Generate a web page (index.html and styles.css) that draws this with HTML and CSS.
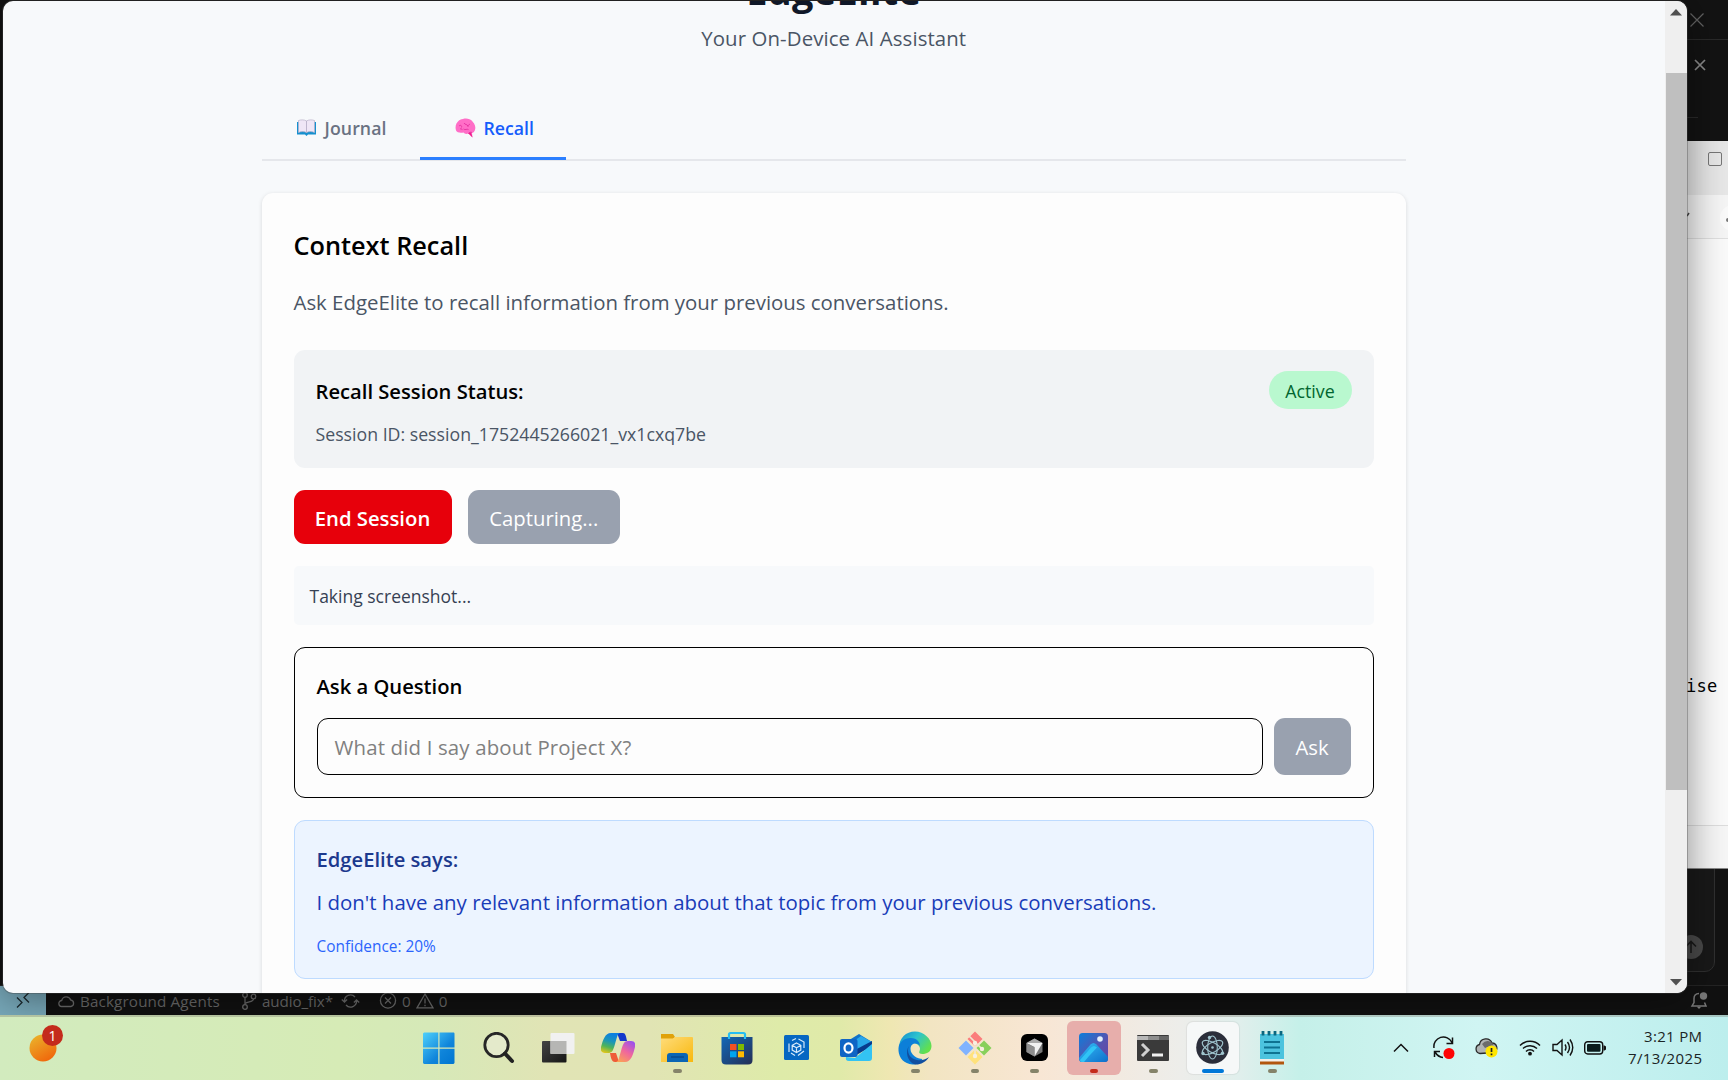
FILE: index.html
```html
<!DOCTYPE html>
<html lang="en">
<head>
<meta charset="utf-8">
<title>EdgeElite</title>
<link rel="stylesheet" href="styles.css">
</head>
<body>
<div class="desktop">

  <div class="editor">
    <svg class="editor-close" width="14" height="14" viewBox="0 0 14 14"><path d="M.5.5l13 13M13.5.5l-13 13" stroke="#646464" stroke-width="1.2"/></svg>
    <svg class="editor-tab-close" width="12" height="12" viewBox="0 0 12 12"><path d="M1 1l10 10M11 1L1 11" stroke="#8c8c8c" stroke-width="1.7"/></svg>
    <i class="editor-rule"></i>
    <i class="editor-rule short"></i>
    <div class="editor-chat"><span class="send"><svg width="14" height="14" viewBox="0 0 14 14" fill="none" stroke="#191919" stroke-width="1.6"><path d="M7 13V1.5M2 6.5l5-5 5 5"/></svg></span></div>
    <footer class="statusbar">
      <span class="remote"><svg width="14" height="17" viewBox="0 0 14 17" fill="none" stroke="#1b2a30" stroke-width="1.3"><path d="M1 5.500l5 5-5 5M13 .5l-5 5 5 5"/></svg></span>
      <span class="st agents"><svg width="17" height="14" viewBox="0 0 17 14" fill="none" stroke="#6a6a6a" stroke-width="1.3"><path d="M4 12.500a3 3 0 0 1-.3-6A4.700 4.700 0 0 1 12.700 6a3.300 3.300 0 0 1 .3 6.500z"/></svg><b>Background Agents</b></span>
      <span class="st branch"><svg width="16" height="18" viewBox="0 0 16 18" fill="none" stroke="#6a6a6a" stroke-width="1.3"><circle cx="4" cy="3" r="2.300"/><circle cx="4" cy="15" r="2.300"/><circle cx="12.500" cy="4.500" r="2.300"/><path d="M4 5.300v7.400M12.500 7c0 3-5 2.500-8.500 4.500"/></svg><b>audio_fix*</b></span>
      <svg class="sync" width="19" height="16" viewBox="0 0 19 16" fill="none" stroke="#6a6a6a" stroke-width="1.3"><path d="M3.500 8.500A6 6 0 0 1 14 4M15.500 7.500A6 6 0 0 1 5 12M.8 6.500l2.700 2.500 2.600-2.500M18.200 9.500L15.500 7l-2.600 2.500"/></svg>
      <span class="st errs"><svg width="18" height="17" viewBox="0 0 18 17" fill="none" stroke="#6a6a6a" stroke-width="1.300"><circle cx="9" cy="8.500" r="7.600"/><path d="M6 5.500l6 6M12 5.500l-6 6"/></svg><b>0</b><svg width="18" height="16" viewBox="0 0 18 16" fill="none" stroke="#6a6a6a" stroke-width="1.300"><path d="M9 1L1 14.800h16zM9 5.500v5M9 11.800v1.500"/></svg><b>0</b></span>
      <svg class="bell" width="18" height="18" viewBox="0 0 18 18" fill="none" stroke="#7a7a7a" stroke-width="1.500"><path d="M9 1.500c-3.600 0-5 2.300-5 5v4L2 14h14l-1.500-3.500"/><path d="M6.800 14.800h4.400L9 17z" fill="#7a7a7a" stroke="none"/><circle cx="13.500" cy="4" r="3.700" fill="#7a7a7a" stroke="none"/></svg>
    </footer>
  </div>

  <div class="notes">
    <div class="notes-title"><i></i></div>
    <div class="notes-menu"><svg width="41" height="44" viewBox="0 0 41 44"><path d="M0 21l2-3" stroke="#444" stroke-width="1.500"/><circle cx="46" cy="23" r="13" fill="#fbfbfb"/><circle cx="41" cy="25" r="2" fill="#777"/></svg></div>
    <div class="notes-text">ise</div>
    <div class="notes-foot"></div>
  </div>

  <div class="window">
    <main class="page">
      <header class="hero">
        <h1><span>EdgeElite</span></h1>
        <p><span>Your On-Device AI Assistant</span></p>
      </header>
      <nav class="tabs">
        <a class="tab">
          <svg width="19" height="17" viewBox="0 0 19 17"><path d="M0 3h19v12.500h-8l-1.500 1.500-1.500-1.500H0z" fill="#1590cf"/><path d="M1.500 1.500C4 .6 7.500.6 9.500 2v11.500c-2-1.200-5.500-1.200-8 0zM17.500 1.500C15 .6 11.500.6 9.500 2v11.500c2-1.200 5.500-1.200 8 0z" fill="#efe6f6" stroke="#b9b0c9" stroke-width=".7"/></svg>
          <span class="journal">Journal</span>
        </a>
        <a class="tab active">
          <svg width="21" height="20" viewBox="0 0 21 20"><path d="M8 1C11 0 15 .5 17.500 3.500c2.500 2.500 3.500 6 2.500 8.500-.7 2-2 3-3 3l.5 4.500-4-4c-2.500.8-4 .3-5-1-3 .5-6.500.3-7.500-2C0 9 .7 5.500 3 3.500 4 2 6 1 8 1z" fill="#ff6ec7"/><path d="M4 8c2-1.500 3 0 2.500 1.500M9 5c1 2 3 1 4 3M15 6c-1 1-2.500 1-2 3M8.500 11c2 1.500 3-.5 5 .5M5 11c1-.5 2 0 2.500 1M13.500 15.500c1-1.500 2.500-1.500 3.500-1" fill="none" stroke="#e02a9a" stroke-width=".8"/><path d="M13 15l3-.5 1.500 5z" fill="#f01e8c"/></svg>
          <span class="recall">Recall</span>
        </a>
      </nav>
      <section class="card">
        <h2><span>Context Recall</span></h2>
        <p class="lead"><span>Ask EdgeElite to recall information from your previous conversations.</span></p>
        <div class="status">
          <div>
            <h3><span>Recall Session Status:</span></h3>
            <p><span>Session ID: session_1752445266021_vx1cxq7be</span></p>
          </div>
          <span class="pill">Active</span>
        </div>
        <div class="actions">
          <button class="btn end"><span>End Session</span></button>
          <button class="btn busy"><span>Capturing...</span></button>
        </div>
        <div class="message"><span>Taking screenshot...</span></div>
        <div class="ask">
          <h3><span>Ask a Question</span></h3>
          <div class="ask-row">
            <div class="field"><span>What did I say about Project X?</span></div>
            <button class="btn ask-btn"><span>Ask</span></button>
          </div>
        </div>
        <div class="answer">
          <h3><span>EdgeElite says:</span></h3>
          <p class="reply"><span>I don't have any relevant information about that topic from your previous conversations.</span></p>
          <p class="confidence"><span>Confidence: 20%</span></p>
        </div>
      </section>
    </main>
    <aside class="scroll">
      <svg width="12" height="7" viewBox="0 0 12 7"><path d="M0 6.500L6 0l6 6.500z" fill="#505050"/></svg>
      <i class="thumb"></i>
      <svg width="12" height="7" viewBox="0 0 12 7"><path d="M0 0l6 6.500L12 0z" fill="#505050"/></svg>
    </aside>
  </div>

  <div class="taskbar">
    <div class="widgets">
      <svg width="28" height="32" viewBox="0 0 28 32"><defs><linearGradient id="sun" x1="0" y1="0" x2=".6" y2="1"><stop offset="0" stop-color="#eab92e"/><stop offset="1" stop-color="#f0690c"/></linearGradient></defs><circle cx="14" cy="17" r="13.500" fill="url(#sun)"/></svg>
      <span class="badge">1</span>
    </div>
    <div class="apps">
      <span class="app"><svg width="32" height="32" viewBox="0 0 32 32"><defs><linearGradient id="win" x1="0" y1="0" x2="1" y2="1"><stop offset="0" stop-color="#4fd0fb"/><stop offset=".6" stop-color="#0f85db"/><stop offset="1" stop-color="#0075d0"/></linearGradient></defs><path d="M1 .5h14.300v15H0V1.500zM16.500.5H31l.5 1v14h-15zM0 16.700h15.300V32H1l-1-1zM16.500 16.700h15V31l-1 1h-14z" fill="url(#win)"/></svg></span>
      <span class="app"><svg width="32" height="32" viewBox="0 0 32 32"><circle cx="13.500" cy="13" r="11.700" fill="#e9edd9" fill-opacity=".6" stroke="#262626" stroke-width="2.800"/><path d="M22 21.500l7 7.500" stroke="#222" stroke-width="4" stroke-linecap="round"/></svg></span>
      <span class="app"><svg width="34" height="32" viewBox="0 0 34 32"><defs><linearGradient id="tv" x1="0" y1="0" x2="1" y2="1"><stop offset="0" stop-color="#444"/><stop offset="1" stop-color="#161616"/></linearGradient></defs><rect x="1" y="9" width="24.500" height="21.500" rx="1" fill="url(#tv)"/><rect x="9.500" y="1" width="24" height="21" rx="1" fill="#f1f1f1"/><path d="M9.500 9h16v13h-16z" fill="#b6b6b4"/></svg></span>
      <span class="app"><svg width="34" height="30" viewBox="0 0 34 30"><defs><linearGradient id="cp1" x1=".4" y1="0" x2=".1" y2="1"><stop offset="0" stop-color="#0c7fe0"/><stop offset=".35" stop-color="#1b96b8"/><stop offset=".65" stop-color="#50b457"/><stop offset="1" stop-color="#f5c813"/></linearGradient><linearGradient id="cp2" x1=".8" y1="0" x2=".2" y2="1"><stop offset="0" stop-color="#9a50ee"/><stop offset=".5" stop-color="#f0679c"/><stop offset="1" stop-color="#fba256"/></linearGradient></defs><path d="M16 0h6c2.500 0 3 3 4 8h-7z" fill="#1238cb"/><path d="M9 20h6l3 9h-4c-3 0-4-3-5-9z" fill="#ee5b38"/><path d="M10 0h9c-3 1-3 5-5 11-2 7-3 9-7 9H4c-3 0-5-2-4-6 2-7 4-14 10-14z" fill="url(#cp1)"/><path d="M24 29h-9c3-1 3-5 5-11 2-7 3-10 7-10h3c3 0 5 2 4 6-2 8-4 15-10 15z" fill="url(#cp2)"/></svg></span>
      <span class="app run"><svg width="34" height="32" viewBox="0 0 34 32"><defs><linearGradient id="fo" x1="0" y1="0" x2="1" y2="1"><stop offset="0" stop-color="#ffdc7a"/><stop offset="1" stop-color="#f8b80d"/></linearGradient></defs><path d="M1 2h12l2 3-3 3H1z" fill="#e0a20a"/><path d="M1 6.500h12l2-1.500h17q1 0 1 1v24H1z" fill="url(#fo)"/><path d="M7 30v-6q0-3 3-3h15q3 0 3 3v6z" fill="#0b66b4"/><path d="M11 25h13" stroke="#083f7c"/></svg></span>
      <span class="app"><svg width="32" height="34" viewBox="0 0 32 34"><defs><linearGradient id="sto" x1="0" y1="0" x2="1" y2="1"><stop offset="0" stop-color="#1168b8"/><stop offset="1" stop-color="#252e54"/></linearGradient></defs><path d="M.5 6h31v23q0 4.500-4.500 4.500H5Q.5 33.500.5 29z" fill="url(#sto)"/><path d="M8 8V3.500Q8 2 9.500 2h13Q24 2 24 3.500V8" fill="none" stroke="#25bdf2" stroke-width="2.200"/><path d="M9 13h6.500v6H9z" fill="#f25022"/><path d="M17 13h6v6h-6z" fill="#7fba00"/><path d="M9 20.300h6.500v6H9z" fill="#00a4ef"/><path d="M17 20.300h6v6h-6z" fill="#ffb900"/></svg></span>
      <span class="app"><svg width="25" height="25" viewBox="0 0 25 25"><rect width="25" height="25" rx="1.500" fill="#0667c2"/><path d="M12.500 8l4.300 2.300v4.800l-4.300 2.500-4.300-2.500v-4.800zM8.200 10.300l4.300 2.400 4.300-2.400M12.500 12.700v4.900M5 17V8.500M8 5.500l4-2M14.500 4L20 7v6M20 16l-6 4.500M11 20.500L7 18" fill="none" stroke="#d7eafa" stroke-width="1.200"/></svg></span>
      <span class="app"><svg width="34" height="30" viewBox="0 0 34 30"><path d="M7 9L20 1l13 8v8H7z" fill="#1173c9"/><path d="M15 8l7-5 11 6-14 11z" fill="#28a8ea"/><path d="M33 8v5L14 24v-6z" fill="#083b8d"/><path d="M33 11v14q0 3-3 3H10q-4 0-3-4l9 1z" fill="#33c3f3"/><rect x="1" y="6" width="17.500" height="18" rx="2" fill="#0f65c5"/><ellipse cx="9.500" cy="15" rx="4" ry="4.700" fill="none" stroke="#fff" stroke-width="2.200"/></svg></span>
      <span class="app run"><svg width="34" height="34" viewBox="0 0 34 34"><defs><linearGradient id="ed" x1="0" y1="0" x2="1" y2=".6"><stop offset="0" stop-color="#1388cf"/><stop offset=".5" stop-color="#2cc3cf"/><stop offset="1" stop-color="#62e04d"/></linearGradient></defs><path d="M1 17C1 7 8 .5 17 .5S33.500 8 33.500 15c0 6-5 8-9 8-3 0-4-1-3-3 2-4-2-8-7-8C7 12 1 17 1 17z" fill="url(#ed)"/><path d="M.5 17c.5-6 6-10 12-10 7 0 10 5 9 8-2-4-9-3-9 3 0 6 7 10 12 10-4 6-10 6-13 5C4 31 0 25 .5 17z" fill="#0c7fd8"/><path d="M11 15c-3 6 1 13 8 14 5 .8 9-.5 12-3-3 5-9 8-14 7.500C9 31 7 20 11 15z" fill="#114fa0"/></svg></span>
      <span class="app run"><svg width="34" height="34" viewBox="0 0 34 34"><path d="M17 .5l7.500 7.500-7.500 7.500L9.500 8z" fill="#fb7d7c"/><path d="M8 9.500l7.500 7.500L8 24.500.5 17z" fill="#80b3ff"/><path d="M26 9.500l7.500 7.500-7.500 7.500-7.500-7.500z" fill="#87d05a"/><path d="M17 18.500l7.500 7.500-7.500 7.500L9.500 26z" fill="#ffe27c"/><path d="M11 5l6 6v13M17 11l7 7" stroke="#f1e5d0" stroke-width="1.700" fill="none"/><g fill="#f7efe0"><circle cx="17" cy="12" r="2.200"/><circle cx="24" cy="18" r="2.200"/><circle cx="17" cy="25" r="2.200"/></g></svg></span>
      <span class="app run"><svg width="27" height="27" viewBox="0 0 27 27"><rect width="27" height="27" rx="6" fill="#000"/><path d="M13.500 4.500l8 4.500v9l-8 4.500-8-4.500V9z" fill="#777"/><path d="M5.500 9l8-4.500 8 4.500z" fill="#aaa"/><path d="M5.500 9h16l-8 13.500V13z" fill="#f1f1f1"/><path d="M5.500 9l8 4.500v9l-8-4.500z" fill="#8d8d8d"/></svg></span>
      <span class="app run photos"><svg width="29" height="29" viewBox="0 0 29 29"><defs><linearGradient id="ph" x1="0" y1="0" x2="1" y2="1"><stop offset="0" stop-color="#0c7edb"/><stop offset=".6" stop-color="#5a51ae"/><stop offset="1" stop-color="#6147a5"/></linearGradient><linearGradient id="ph2" x1="0" y1="0" x2="1" y2="1"><stop offset="0" stop-color="#35bdf5"/><stop offset="1" stop-color="#0d6fcc"/></linearGradient></defs><rect width="29" height="29" rx="3.500" fill="url(#ph)"/><path d="M0 25l11.500-13.500q3-3 6 0L29 24v2q0 3-3 3H3q-3 0-3-4z" fill="url(#ph2)"/><path d="M1 27l11-12.500q3-3 6 0L10 23l-5 6H3q-2 0-2-2z" fill="#30c4f6"/><circle cx="21" cy="6" r="2.800" fill="#e3f0fc"/></svg></span>
      <span class="app run"><svg width="32" height="26" viewBox="0 0 32 26"><rect width="32" height="26" rx="1" fill="#3a3a3a"/><path d="M0 1h11v4H0z" fill="#b7b7b7"/><path d="M11 1h11v4H11z" fill="#8e8e8e"/><path d="M22 1h10v4H22z" fill="#666"/><path d="M5 9l6 6-6 6" fill="none" stroke="#d0d0d0" stroke-width="3"/><path d="M15 20h11" stroke="#f0f0f0" stroke-width="3"/></svg></span>
      <span class="app run current"><svg width="33" height="33" viewBox="0 0 33 33"><circle cx="16.500" cy="16.500" r="16.300" fill="#2b2e3a"/><g fill="none" stroke="#9fc4ce" stroke-width="1.100"><ellipse cx="16.500" cy="16.500" rx="11.500" ry="4.800" transform="rotate(90 16.500 16.500)"/><ellipse cx="16.500" cy="16.500" rx="11.500" ry="4.800" transform="rotate(30 16.500 16.500)"/><ellipse cx="16.500" cy="16.500" rx="11.500" ry="4.800" transform="rotate(-30 16.500 16.500)"/></g><g fill="#9fc4ce"><circle cx="16.500" cy="16.500" r="1.300"/><circle cx="7" cy="22.500" r="1.700"/><circle cx="26.500" cy="22.300" r="1.700"/><circle cx="13.500" cy="6.500" r="1.700"/></g></svg></span>
      <span class="app run"><svg width="26" height="34" viewBox="0 0 26 34"><path d="M1 3h24v26H1z" fill="#4cc3de"/><path d="M4 0v4.500M10 0v4.500M16 0v4.500M22 0v4.500" stroke="#0a6780" stroke-width="2.800"/><path d="M5 11h16M5 16.500h16M5 22h16" stroke="#0e7391" stroke-width="1.800"/><path d="M1 28h24v3H1z" fill="#f4efe9"/><path d="M1 30.500h24v3H1z" fill="#b2560e"/></svg></span>
    </div>
    <div class="tray">
      <svg class="chev" width="16" height="10" viewBox="0 0 16 10" fill="none" stroke="#111" stroke-width="1.500"><path d="M1 8.500l7-7 7 7"/></svg>
      <svg class="upd" width="24" height="24" viewBox="0 0 24 24" fill="none" stroke="#111" stroke-width="1.500"><path d="M2 12A9.500 9.500 0 0 1 20 6.500M20.500 1.500v6h-6M2.500 21v-5.500H8M3 16q3 5 8 5.500"/><circle cx="17" cy="17.500" r="5.500" fill="#fe0505" stroke="none"/></svg>
      <svg class="cloud" width="24" height="20" viewBox="0 0 24 20"><path d="M5 15.500a4.600 4.600 0 0 1-.5-9A6.500 6.500 0 0 1 17 5a5 5 0 0 1 2 9.500z" fill="#b0b4b4" stroke="#2a2a2a" stroke-width="1.300"/><path d="M10 10L7 6q4-5 9-2l3 3z" fill="#6c6c6c"/><circle cx="16.500" cy="13.500" r="6" fill="#ffe500"/><path d="M16.500 10v4M16.500 15.500v1.700" stroke="#222" stroke-width="1.700"/></svg>
      <svg class="wifi" width="22" height="17" viewBox="0 0 22 17" fill="none" stroke="#111" stroke-width="1.500"><path d="M1 6.500a14 14 0 0 1 20 0M4 9.500a10 10 0 0 1 14 0M7 12.500a5.700 5.700 0 0 1 8 0"/><circle cx="11" cy="14.700" r="1.900" fill="#111" stroke="none"/></svg>
      <svg class="vol" width="22" height="19" viewBox="0 0 22 19" fill="none" stroke="#111" stroke-width="1.400"><path d="M1 6.500h4L10 2v15l-5-4.500H1zM13 6.500q2 3 0 6M15.500 4q4 5.500 0 11M18 1.500q5.500 8 0 16"/></svg>
      <svg class="bat" width="22" height="14" viewBox="0 0 22 14"><rect x=".7" y=".7" width="18" height="12.300" rx="3" fill="none" stroke="#111" stroke-width="1.400"/><rect x="3" y="3" width="13.500" height="7.700" rx="1" fill="#0b1c1c"/><path d="M19.500 4.500h1l1.500 1v3l-1.500 1h-1z" fill="#111"/></svg>
      <div class="clock"><span class="time">3:21 PM</span><span class="date">7/13/2025</span></div>
    </div>
  </div>
</div>
</body>
</html>
```
FILE: styles.css
```css
* { box-sizing: border-box; margin: 0; padding: 0; }
html, body { width: 1728px; height: 1080px; overflow: hidden; }
body { font-family: "Open Sans", "Noto Sans", sans-serif; color: #000; }
svg { display: block; flex: none; }
b { font-weight: 400; }
.desktop { position: relative; width: 1728px; height: 1080px; background: #111; overflow: hidden; }

/* dark editor behind everything */
.editor { position: absolute; inset: 0 0 65px 0; background: #131313; }
.editor-close { position: absolute; left: 1690px; top: 13px; }
.editor-tab-close { position: absolute; left: 1694px; top: 59px; }
.editor-rule { position: absolute; right: 0; top: 39px; width: 42px; height: 1px; background: #2a2a2a; }
.editor-rule.short { top: 117px; right: 30px; width: 12px; }
.editor-chat { position: absolute; left: 1600px; top: 800px; width: 115px; height: 172px; border: 1px solid #303030; border-radius: 10px; background: #191919; }
.send { position: absolute; right: 11px; bottom: 12px; width: 24px; height: 24px; border-radius: 50%; background: #4a4a4a; display: flex; align-items: center; justify-content: center; }
.statusbar { position: absolute; left: 0; right: 0; bottom: 0; height: 30px; border-top: 1px solid #242424; background: #111; display: flex; align-items: center; color: #6a6a6a; font-size: 15.2px; line-height: 20px; }
.remote { width: 46px; height: 30px; background: #78a9ba; display: flex; align-items: center; justify-content: center; margin-right: 12px; }
.st { display: flex; align-items: center; }
.agents { gap: 5px; width: 183px; letter-spacing: .15px; }
.branch { gap: 5px; width: 100px; letter-spacing: -.1px; }
.errs { gap: 5px; margin-left: 19px; }
.bell { margin-left: auto; margin-right: 20px; }

/* light document window */
.notes { position: absolute; left: 1400px; top: 141px; width: 340px; height: 728px; background: #fbfbfb; display: flex; flex-direction: column; border-bottom: 1px solid #888; }
.notes-title { height: 54px; background: #e8e8e8; padding: 11px 0 0 308px; }
.notes-title i { display: block; width: 14px; height: 14px; border: 1.500px solid #777; border-radius: 2px; }
.notes-menu { height: 44px; background: #f6f6f6; border-bottom: 1px solid #e0e0e0; padding-left: 287px; }
.notes-text { flex: 1; padding: 435px 0 0 286px; font: 17px/24px "DejaVu Sans Mono", monospace; letter-spacing: .3px; }
.notes-foot { height: 43px; border-top: 1px solid #dedede; background: #f7f7f7; }

/* application window */
.window { position: absolute; left: 3px; top: 1px; width: 1684px; height: 992px; border-radius: 10px; overflow: hidden; background: #f7f9fb; display: flex; box-shadow: 0 0 0 1px rgba(70,70,70,.35), 0 4px 40px rgba(0,0,0,.45); }
.page { width: 1662px; padding: 0 259px 0 258.500px; overflow: hidden; }
.scroll { width: 22px; background: #efefef; display: flex; flex-direction: column; align-items: center; padding: 8px 0 7px; }
.thumb { width: 21px; height: 717px; margin: 57px 0 auto auto; background: #bfbfbf; }

.hero { text-align: center; height: 120px; overflow: hidden; }
.hero h1 { margin-top: -38px; font-size: 37.900px; line-height: 54px; font-weight: 700; letter-spacing: .3px; color: #101828; }
.hero p { margin-top: 5px; font-size: 20.400px; line-height: 32px; letter-spacing: .1px; color: #4a5565; }
.tabs { display: flex; height: 41px; margin-top: -1px; border-bottom: 2px solid #e5e7eb; font-size: 17.700px; font-weight: 600; color: #6a7282; }
.tab { display: flex; gap: 9px; height: 40px; padding: 0 32px 25px 35px; align-items: center; }
.tab { width: 158px; }
.tab.active { width: 146px; gap: 8px; color: #155dfc; border-bottom: 3px solid #2b7fff; padding-bottom: 22px; }
.tab span { line-height: 24px; }
.journal { letter-spacing: .1px; }

.card { margin-top: 32px; height: 860px; background: #fdfdfd; border-radius: 11px; box-shadow: 0 1px 4px rgba(0,0,0,.13); padding: 34px 32.500px 0 32px; }
.card h2 { font-size: 25.300px; line-height: 36px; font-weight: 600; }
.lead { margin-top: 23px; margin-bottom: 32px; font-size: 20.400px; line-height: 32px; color: #4a5565; }
h3 { font-size: 20.200px; line-height: 32px; font-weight: 600; }
.status { height: 118px; background: #f1f3f5; border-radius: 11px; padding: 25px 22px 0; display: flex; justify-content: space-between; align-items: flex-start; }
.status p { margin-top: 14px; font-size: 17.730px; line-height: 27px; color: #4a5565; }
.pill { margin-top: -4px; width: 83px; height: 38px; border-radius: 19px; background: #b9f8cf; color: #016630; font-size: 17.800px; line-height: 40px; text-align: center; }
.actions { display: flex; gap: 16px; margin-top: 22px; }
.btn { border: 0; height: 54px; border-radius: 11px; color: #fff; font: 400 20.300px/54px "Open Sans", sans-serif; text-align: center; white-space: nowrap; padding-top: 1px; }
.end { width: 158px; background: #e7000b; font-weight: 600; }
.busy { width: 152.500px; background: #99a1af; }
.message { margin-top: 22px; height: 59px; border-radius: 5px; background: #f7f9fb; padding-left: 16px; font-size: 17.500px; line-height: 61px; color: #364153; }
.ask { margin-top: 22px; height: 151px; border: 1px solid #000; border-radius: 11px; padding: 22px 22px 0; }
.ask-row { display: flex; gap: 11px; margin-top: 16px; }
.field { flex: 1; height: 57px; border: 1.500px solid #000; border-radius: 11px; padding-left: 17px; font-size: 20.400px; letter-spacing: .17px; line-height: 57px; color: #808080; }
.ask-btn { width: 77px; height: 57px; line-height: 57px; background: #99a1af; }
.answer { margin-top: 22px; height: 159px; border: 1px solid #bedbff; border-radius: 11px; background: #ecf4ff; padding: 22px 22px 0; }
.answer h3 { color: #1c398e; }
.reply { margin-top: 11px; font-size: 20.430px; line-height: 32px; color: #193cb8; }
.confidence { margin-top: 18px; font-size: 15.400px; line-height: 22px; color: #2b64fc; }

/* taskbar */
.taskbar { position: absolute; left: 0; right: 0; bottom: 0; height: 65px; display: flex; align-items: stretch; box-shadow: inset 0 2px 0 rgba(120,120,110,.35);
  background: linear-gradient(90deg, #d2ebbe 0, #d6ebb6 340px, #d6e9b8 430px, #e1e4b5 550px, #e1e4b4 650px, #deeba9 780px, #e0eaa9 840px, #efe7b2 890px, #f2e5c2 930px, #f8e6d4 1040px, #ededea 1180px, #e0efec 1240px, #c5f0e9 1300px, #d0f5f3 1480px, #bceeed 1728px); }
.widgets { position: relative; width: 409px; padding: 16px 0 0 29px; }
.badge { position: absolute; left: 42px; top: 10px; width: 21px; height: 21px; border-radius: 50%; background: #c42b1c; color: #fff; font-size: 14px; line-height: 21px; text-align: center; }
.apps { display: flex; }
.app { position: relative; width: 59.500px; height: 65px; display: flex; align-items: center; justify-content: center; padding-left: 1px; }
.app svg { position: relative; z-index: 1; }
.run::after { content: ""; position: absolute; z-index: 1; left: 26px; bottom: 7px; width: 8.500px; height: 4px; border-radius: 2px; background: #85836a; }
.photos::before, .current::before { content: ""; position: absolute; left: 3px; top: 6px; width: 54px; height: 54px; border-radius: 6px; background: #e7aeab; }
.photos::after { background: #c42b1c; }
.current::before { left: 4px; top: 7px; width: 52px; height: 52px; background: #f6f8f8; box-shadow: 0 0 1px 1px rgba(0,0,0,.06); }
.current::after { left: 19px; width: 22px; background: #0078d8; }
.tray { flex: 1; display: flex; align-items: center; padding-right: 26px; }
.chev { margin-left: 91px; }
.upd { margin-left: 23px; }
.cloud { margin-left: 19px; }
.wifi { margin-left: 20px; }
.vol { margin-left: 11px; }
.bat { margin-left: 10px; }
.clock { margin: -2px 0 0 auto; display: flex; flex-direction: column; text-align: right; font-size: 15px; line-height: 22px; color: #1b2525; }
.time { letter-spacing: .3px; margin-right: -.3px; }
.date { letter-spacing: .38px; margin-right: -.4px; }
```
